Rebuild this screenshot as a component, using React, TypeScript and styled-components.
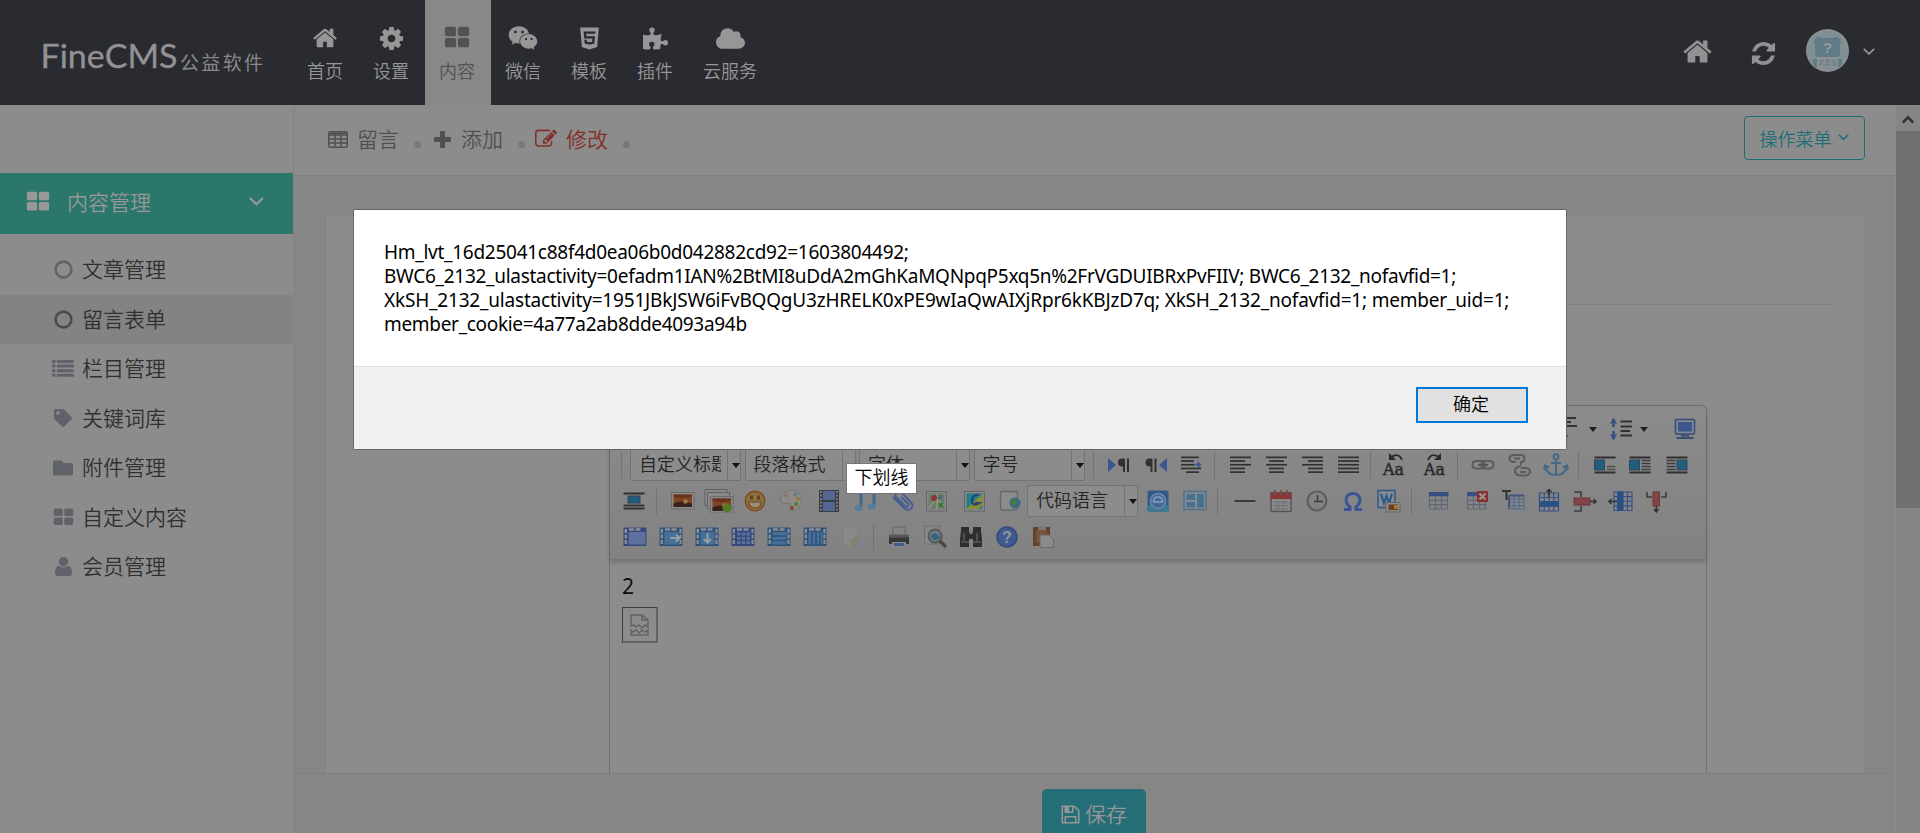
import React from "react";
import styled, { createGlobalStyle } from "styled-components";
import { FaWeixin, FaHtml5, FaPuzzlePiece, FaCloud, FaTag, FaFolder } from "react-icons/fa";

const paper = "#8c8c8c";
const canvas = "#868686";
const line = "#808080";
const teal = "#1c6d77";

const GlobalStyle = createGlobalStyle`
  * { box-sizing: border-box; }
  body {
    margin: 0;
    overflow: hidden;
    background: ${canvas};
    font-family: "Open Sans", "Noto Sans CJK SC", sans-serif;
    font-weight: 350;
  }
`;

/* ---------- shared glyphs ---------- */

const glyphs = {
  home: "M1472 992v480q0 26-19 45t-45 19h-384v-384h-256v384h-384q-26 0-45-19t-19-45v-480q0-1 .5-3t.5-3l575-474 575 474q1 2 1 6zm223-69l-62 74q-8 9-21 11h-3q-13 0-21-7l-692-577-692 577q-12 8-24 7-13-2-21-11l-62-74q-8-10-7-23.5t11-21.5l719-599q32-26 76-26t76 26l244 204v-195q0-14 9-23t23-9h192q14 0 23 9t9 23v408l219 182q10 8 11 21.5t-7 23.5z",
  cog: "M1152 896q0-106-75-181t-181-75-181 75-75 181 75 181 181 75 181-75 75-181zm512-109v222q0 12-8 23t-20 13l-185 28q-19 54-39 91 35 50 107 138 10 12 10 25t-9 23q-27 37-99 108t-94 71q-12 0-26-9l-138-108q-44 23-91 38-16 136-29 186-7 28-36 28h-222q-14 0-24.5-8.5t-11.5-21.5l-28-184q-49-16-90-37l-141 107q-10 9-25 9-14 0-25-11-126-114-165-168-7-10-7-23 0-12 8-23 15-21 51-66.5t54-70.5q-27-50-41-99l-183-27q-13-2-21-12.5t-8-23.5v-222q0-12 8-23t19-13l186-28q14-46 39-92-40-57-107-138-10-12-10-24 0-10 9-23 26-36 98.5-107.5t94.5-71.5q13 0 26 10l138 107q44-23 91-38 16-136 29-186 7-28 36-28h222q14 0 24.5 8.5t11.5 21.5l28 184q49 16 90 37l142-107q9-9 24-9 13 0 25 10 129 119 165 170 7 8 7 22 0 12-8 23-15 21-51 66.5t-54 70.5q26 50 41 98l183 28q13 2 21 12.5t8 23.5z",
  large: "M832 1024v384q0 52-38 90t-90 38h-512q-52 0-90-38t-38-90v-384q0-52 38-90t90-38h512q52 0 90 38t38 90zm0-768v384q0 52-38 90t-90 38h-512q-52 0-90-38t-38-90v-384q0-52 38-90t90-38h512q52 0 90 38t38 90zm896 768v384q0 52-38 90t-90 38h-512q-52 0-90-38t-38-90v-384q0-52 38-90t90-38h512q52 0 90 38t38 90zm0-768v384q0 52-38 90t-90 38h-512q-52 0-90-38t-38-90v-384q0-52 38-90t90-38h512q52 0 90 38t38 90z",
  refresh: "M1639 1056q0 5-1 7-64 268-268 434.5t-478 166.5q-146 0-282.5-55t-243.5-157l-129 129q-19 19-45 19t-45-19-19-45v-448q0-26 19-45t45-19h448q26 0 45 19t19 45-19 45l-137 137q71 66 161 102t187 36q134 0 250-65t186-179q11-17 53-117 8-23 30-23h192q13 0 22.5 9.5t9.5 22.5zm25-800v448q0 26-19 45t-45 19h-448q-26 0-45-19t-19-45 19-45l138-138q-148-137-349-137-134 0-250 65t-186 179q-11 17-53 117-8 23-30 23h-199q-13 0-22.5-9.5t-9.5-22.5v-7q65-268 270-434.5t480-166.5q146 0 284 55.5t245 156.500l130-129q19-19 45-19t45 19 19 45z",
  edit: "M888 1184l116-116-152-152-116 116v56h96v96h56zm440-720q-16-16-33 1l-350 350q-17 17-1 33t33-1l350-350q17-17 1-33zm80 594v190q0 119-84.5 203.5t-203.5 84.5h-832q-119 0-203.5-84.5t-84.5-203.5v-832q0-119 84.5-203.5t203.5-84.5h832q63 0 117 25 15 7 18 23 3 17-9 29l-49 49q-14 14-32 8-23-6-45-6h-832q-66 0-113 47t-47 113v832q0 66 47 113t113 47h832q66 0 113-47t47-113v-126q0-13 9-22l64-64q15-15 35-7t20 29zm-96-738l288 288-672 672h-288v-288zm444 132l-92 92-288-288 92-92q28-28 68-28t68 28l152 152q28 28 28 68t-28 68z",
  floppy: "M512 1536h768v-384h-768v384zm896 0h128v-896q0-14-10-38.5t-20-34.5l-281-281q-10-10-34-20t-39-10v416q0 40-28 68t-68 28h-576q-40 0-68-28t-28-68v-416h-128v1280h128v-416q0-40 28-68t68-28h832q40 0 68 28t28 68v416zm-384-928v-320q0-13-9.5-22.5t-22.5-9.5h-192q-13 0-22.5 9.5t-9.5 22.5v320q0 13 9.5 22.5t22.5 9.5h192q13 0 22.5-9.5t9.5-22.5zm640 32v928q0 40-28 68t-68 28h-1344q-40 0-68-28t-28-68v-1344q0-40 28-68t68-28h928q40 0 88 20t76 48l280 280q28 28 48 76t20 88z",
};

const Glyph = ({ name, size }: { name: keyof typeof glyphs; size: number }) => (
  <svg width={size} height={size} viewBox="0 0 1792 1792" fill="currentColor"><path d={glyphs[name]} /></svg>
);

const Chevron = ({ w = 15 }: { w?: number }) => (
  <svg width={w} height={w * 0.6} viewBox="0 0 15 9" fill="none" stroke="currentColor" strokeWidth="2.2"><path d="M1 1l6.500 6.300L14 1" /></svg>
);

const ListGlyph = () => (
  <svg width="22" height="17" viewBox="0 0 22 17" fill="currentColor">
    {[0, 4.600, 9.200, 13.800].map((y) => (
      <g key={y}><rect y={y} width="3.500" height="3" rx=".5" /><rect x="4.800" y={y} width="17" height="3" rx=".5" /></g>
    ))}
  </svg>
);

const RingGlyph = () => (
  <svg width="19" height="19" viewBox="0 0 19 19" fill="none" stroke="currentColor" strokeWidth="2.600"><circle cx="9.500" cy="9.500" r="7.900" /></svg>
);

const UserGlyph = () => (
  <svg width="17" height="19" viewBox="0 0 17 19" fill="currentColor">
    <circle cx="8.500" cy="4.800" r="4.700" />
    <path d="M3.800 8.800Q8.500 12.200 13.200 8.800Q17 9.500 17 15.500Q17 19 14 19H3Q0 19 0 15.500Q0 9.500 3.800 8.800z" />
  </svg>
);

const TableGlyph = () => (
  <svg width="20" height="17" viewBox="0 0 20 17" fill="none" stroke="currentColor" strokeWidth="1.500">
    <rect x=".75" y=".75" width="18.500" height="15.500" rx="1.500" />
    <path d="M1 2.200h18M1 4h18M1 8h18M1 12h18M7 3v13M13 3v13" />
  </svg>
);

const PlusGlyph = () => (
  <svg width="17" height="17" viewBox="0 0 17 17" fill="currentColor"><path d="M6 1q0-1 1-1h3q1 0 1 1v5h5q1 0 1 1v3q0 1-1 1h-5v5q0 1-1 1H7q-1 0-1-1v-5H1q-1 0-1-1V7q0-1 1-1h5z" /></svg>
);

/* ---------- header ---------- */

const Page = styled.div`
  height: 833px;
  width: 1920px;
  display: flex;
  flex-direction: column;
  overflow: hidden;
  position: relative;
`;

const Header = styled.header`
  height: 105px;
  flex: none;
  display: flex;
  background: #2a2b31;
  color: #919191;
`;

const LogoArea = styled.div`
  width: 292px;
`;

const Nav = styled.nav`
  display: flex;
  flex: 1;
`;

const NavItem = styled.a<{ $active?: boolean }>`
  min-width: 66px;
  padding: 0 16px 0 14px;
  display: flex;
  flex-direction: column;
  align-items: center;
  font-size: 18px;
  line-height: 26px;
  background: ${(p) => (p.$active ? "#888888" : "transparent")};
  color: ${(p) => (p.$active ? "#505254" : "#969696")};
  &:first-child { margin-left: 1px; }
`;

const NavIcon = styled.span`
  height: 32px;
  margin: 22px 0 4px;
  display: flex;
  align-items: center;
`;

const HeaderTools = styled.div`
  display: flex;
  align-items: center;
  height: 101px;
  padding-right: 45px;
`;

const ToolSlot = styled.span<{ $after: number; $drop?: number }>`
  display: flex;
  margin-right: ${(p) => p.$after}px;
  padding-top: ${(p) => p.$drop ?? 0}px;
`;

const Logo = () => (
  <svg width="292" height="105">
    <text x="40.500" y="67.500" textLength="137" lengthAdjust="spacingAndGlyphs" fontFamily="Lato, sans-serif" fontWeight="400" fontSize="33.500" fill="#929294" stroke="#929294" strokeWidth=".3">FineCMS</text>
    <text x="180" y="69.500" textLength="83" fontFamily="'Noto Sans CJK SC', sans-serif" fontWeight="400" fontSize="19" fill="#88888b">公益软件</text>
  </svg>
);

const Avatar = () => (
  <svg width="43" height="43" viewBox="0 0 43 43">
    <circle cx="21.500" cy="21.500" r="21.500" fill="#8c8f90" />
    <circle cx="21.500" cy="21.500" r="19.500" fill="#7f8f93" />
    <path d="M10 9q3-2 6 0h11q3-2 6 0q3 3 1 6v9q0 4-4 4H13q-4 0-4-4v-9q-2-3 1-6z" fill="#5f7b87" />
    <path d="M7 30h5v8H9q-3-3-2-8zM36 30h-5v8h3q3-3 2-8z" fill="#5f7b87" />
    <rect x="11" y="28.500" width="21" height="9" fill="#909496" />
    <text x="21.500" y="24" textAnchor="middle" fontFamily="Liberation Sans, sans-serif" fontWeight="700" fontSize="15" fill="#969a9b">?</text>
    <text x="21.500" y="36" textAnchor="middle" fontFamily="'Noto Sans CJK SC', sans-serif" fontWeight="700" fontSize="6.500" fill="#6e7f85">求真像</text>
  </svg>
);

/* ---------- sidebar ---------- */

const Body = styled.div`
  display: flex;
  flex: 1;
  min-height: 0;
`;

const Sidebar = styled.aside`
  width: 293px;
  flex: none;
  padding-top: 68px;
  background: ${paper};
`;

const SectionHead = styled.div`
  height: 61px;
  padding: 0 29px 4px 26px;
  display: flex;
  align-items: center;
  font-size: 21px;
  background: #2c776c;
  color: #989898;
`;

const SectionTitle = styled.span`
  flex: 1;
  margin: -1px 0 0 17px;
`;

const Menu = styled.ul`
  list-style: none;
  margin: 0;
  padding: 11px 0 0;
`;

const MenuItem = styled.li<{ $active?: boolean }>`
  height: 49.500px;
  padding-left: 50px;
  display: flex;
  align-items: center;
  font-size: 21px;
  color: #303030;
  background: ${(p) => (p.$active ? "#838383" : "transparent")};
`;

const MenuIcon = styled.span<{ $active?: boolean }>`
  width: 26px;
  margin-right: 6px;
  display: flex;
  justify-content: center;
  color: ${(p) => (p.$active ? "#484c52" : "#5f6369")};
`;

const Label = styled.span`
  margin-top: -3px;
`;

/* ---------- main area ---------- */

const Main = styled.main`
  flex: 1;
  min-width: 0;
  display: flex;
  flex-direction: column;
  border-left: 2px solid ${canvas};
  background: ${canvas};
`;

const Crumbs = styled.div`
  height: 71px;
  flex: none;
  display: flex;
  align-items: center;
  padding: 0 30px 0 33px;
  background: ${paper};
  border-bottom: 1px solid ${line};
  font-size: 21px;
  color: #4e5052;
`;

const Crumb = styled.span<{ $active?: boolean; $gap?: number }>`
  display: flex;
  align-items: center;
  margin-top: -2px;
  gap: ${(p) => p.$gap ?? 9}px;
  color: ${(p) => (p.$active ? "#832e29" : "inherit")};
`;

const Dot = styled.i<{ $after: number }>`
  width: 7px;
  height: 7px;
  margin: 8px ${(p) => p.$after}px 0 15px;
  border-radius: 50%;
  background: #787878;
`;

const ActionMenu = styled.button`
  height: 44px;
  width: 121px;
  margin: 0 0 5px auto;
  display: flex;
  align-items: center;
  justify-content: center;
  gap: 6px;
  padding: 0 1px 0 0;
  border: 1px solid ${teal};
  border-radius: 4px;
  background: transparent;
  color: ${teal};
  font: inherit;
  font-size: 18px;
`;

const Card = styled.section`
  flex: 1;
  min-height: 0;
  overflow: hidden;
  margin: 38px 30px 0 30px;
  padding: 0 29px;
  border: 1px solid #828384;
  border-bottom: 0;
  border-radius: 5px 5px 0 0;
  background: ${paper};
`;

const CardHead = styled.div`
  height: 90px;
  border-bottom: 1px solid #828282;
`;

const Editor = styled.div`
  width: 1098px;
  height: 380px;
  margin: 100px 0 0 254px;
  border: 1px solid #727272;
  border-radius: 5px 5px 0 0;
`;

const Toolbar = styled.div`
  height: 154px;
  padding: 5px 6px 0 7px;
  border-bottom: 1px solid #757575;
  border-radius: 5px 5px 0 0;
  background: linear-gradient(#8b8b8b, #828282);
  box-shadow: 0 2px 5px rgba(0, 0, 0, 0.2);
`;

const ToolRow = styled.div<{ $end?: boolean }>`
  height: 36px;
  display: flex;
  align-items: center;
  justify-content: ${(p) => (p.$end ? "flex-end" : "flex-start")};
`;

const Tool = styled.span<{ $gap?: number; $w?: number }>`
  width: ${(p) => p.$w ?? 36}px;
  flex: none;
  margin-left: ${(p) => p.$gap ?? 0}px;
  display: flex;
  justify-content: center;
  opacity: 0.88;
`;

const Separator = styled.i<{ $gap?: number }>`
  width: 1px;
  height: 27px;
  flex: none;
  margin: 0 7px 0 ${(p) => p.$gap ?? 4}px;
  background: #727272;
`;

const Combo = styled.span<{ $gap?: number }>`
  width: 111px;
  height: 32px;
  flex: none;
  display: flex;
  margin-left: ${(p) => p.$gap ?? 3.500}px;
  border: 1px solid #737373;
  border-radius: 2px;
  background: ${paper};
  font-size: 18px;
  line-height: 28px;
  color: #242424;
`;

const ComboText = styled.span`
  width: 97px;
  flex: none;
  padding-left: 8px;
  border-right: 1px solid #737373;
  overflow: hidden;
  white-space: nowrap;
`;

const ComboClip = styled.span`
  display: inline-block;
  max-width: 82px;
  overflow: hidden;
  vertical-align: top;
`;

const Caret = styled.i`
  border: 4px solid transparent;
  border-top: 5px solid #111;
  border-bottom: 0;
  margin: 13px auto 0 4px;
`;

const RowCaret = styled(Caret)`
  margin: 1px 0 0 0;
`;

const Document = styled.div`
  padding: 8px 12px;
  font-size: 21px;
  line-height: 36px;
  color: #0c0c0c;
  font-weight: 400;
  font-family: "Noto Sans", sans-serif;
`;

const BrokenImage = styled.span`
  width: 36px;
  height: 36px;
  margin-top: 3px;
  display: flex;
  align-items: center;
  justify-content: center;
  border: 1px solid #3f3f3f;
  border-right: 2px solid #646464;
  border-bottom: 2px solid #646464;
`;

const Footer = styled.footer`
  height: 60px;
  flex: none;
  display: flex;
  justify-content: center;
  padding: 15px 2px 0 0;
  border-top: 1px solid ${line};
`;

const SaveButton = styled.button`
  width: 104px;
  height: 52px;
  flex: none;
  display: flex;
  align-items: center;
  justify-content: center;
  gap: 4px;
  padding: 0 1px 2px 0;
  border: 0;
  border-radius: 5px;
  background: #256e77;
  color: #979797;
  font: inherit;
  font-size: 21px;
`;

const Scrollbar = styled.div`
  width: 25px;
  flex: none;
  border-left: 1px solid #8b8b8b;
  background: #858585;
`;

const ScrollUp = styled.div`
  height: 26px;
  display: flex;
  align-items: center;
  justify-content: center;
  padding-top: 3px;
  color: #333;
`;

const Thumb = styled.div`
  height: 377px;
  background: #707070;
`;

/* ---------- dialog and tooltip ---------- */

const Dialog = styled.div`
  position: absolute;
  left: 353px;
  top: 209px;
  width: 1214px;
  height: 241px;
  display: flex;
  flex-direction: column;
  border: 1px solid #666;
  border-radius: 2px;
  background: #fff;
  color: #000;
`;

const Message = styled.div`
  height: 156px;
  padding: 30px 0 0 30px;
  font-family: "Noto Sans", sans-serif;
  font-weight: 400;
  font-size: 19px;
`;

const MessageLine = styled.div<{ $track: number }>`
  height: 24px;
  line-height: 24px;
  white-space: nowrap;
  letter-spacing: ${(p) => p.$track}px;
`;

const DialogFoot = styled.div`
  flex: 1;
  display: flex;
  justify-content: flex-end;
  padding: 20px 38px 0;
  border-top: 1px solid #dfdfdf;
  background: #f1f1f1;
`;

const OkButton = styled.button`
  width: 112px;
  height: 36px;
  padding: 0 2px 2px 0;
  border: 2px solid #0078d7;
  background: #e1e1e1;
  color: #000;
  font: inherit;
  font-size: 18px;
  line-height: 28px;
`;

const Tip = styled.div`
  position: absolute;
  left: 846px;
  top: 463px;
  width: 71px;
  height: 31px;
  border: 1px solid #767676;
  background: #fff;
  color: #000;
  font-size: 18px;
  line-height: 27px;
  text-align: center;
`;

/* ---------- editor tool drawings ---------- */

const Svg = ({ children, w = 24 }: { children: React.ReactNode; w?: number }) => (
  <svg width={w} height="24" viewBox={`0 0 ${w} 24`} fill="none">{children}</svg>
);

const ink = "#262626";
const blue = "#2f4a86";

const Bars = ({ rows, x = 2 }: { rows: [number, number][]; x?: number }) => (
  <g fill={ink}>{rows.map(([o, w], i) => <rect key={i} x={x + o} y={3.500 + i * 3.700} width={w} height="1.700" />)}</g>
);

const Align = ({ kind }: { kind: "l" | "c" | "r" | "j" }) => {
  const widths = kind === "j" ? [21, 21, 21, 21, 21] : [21, 15, 21, 15, 15];
  const rows = widths.map((w, i): [number, number] => [kind === "r" ? 21 - w : kind === "c" ? (21 - w) / 2 : 0, w]);
  return <Svg><Bars rows={rows} /></Svg>;
};

const Float = ({ side }: { side: "l" | "r" | "full" | "none" }) => (
  <Svg>
    <path d="M1.500 4.500h21M1.500 19.500h21" stroke={ink} strokeWidth="1.800" />
    {side === "none" && <path d="M1.500 16.500h21" stroke={ink} strokeWidth="1.800" />}
    <rect x={side === "r" ? 12 : side === "none" ? 6 : 1.500} y="7" width={side === "none" ? 12 : 10} height={side === "none" ? 7 : 10} fill="#12597c" stroke="#2a3c50" />
    {side === "l" && <path d="M14 13.500h8.500M14 16.500h8.500" stroke="#444" strokeWidth="1.300" />}
    {side === "full" && <path d="M13.500 7.500h9M13.500 10.500h9M13.500 13.500h9M13.500 16.500h9" stroke="#333" strokeWidth="1.300" />}
    {side === "r" && <path d="M1.500 7.500h9M1.500 10.500h9M1.500 13.500h9M1.500 16.500h9" stroke="#333" strokeWidth="1.300" />}
  </Svg>
);

const Pilcrow = ({ rtl }: { rtl?: boolean }) => (
  <Svg>
    <path d={rtl ? "M23 5v14l-8-7z" : "M1 5v14l8-7z"} fill="#2f5292" />
    <g transform={rtl ? "translate(-9.500 0)" : ""}>
      <path d="M22.500 5.500h-7.500a4 4 0 0 0 0 8h1.500V5.500z" fill={ink} />
      <path d="M17 5.500V19M21 5.500V19" stroke={ink} strokeWidth="2" />
    </g>
  </Svg>
);

const CaseTool = ({ flip }: { flip?: boolean }) => (
  <Svg>
    <text x="1" y="22" fontFamily="DejaVu Serif, serif" fontWeight="400" fontSize="16" fill="#1c1c1c" stroke="#1c1c1c" strokeWidth=".5" textLength="21" lengthAdjust="spacingAndGlyphs">Aa</text>
    <g transform={flip ? "translate(25 0) scale(-1 1)" : ""}>
      <path d="M9 4q8-5 11 3" stroke="#1c1c1c" strokeWidth="1.700" />
      <path d="M7 0v7h7z" fill="#1c1c1c" />
    </g>
  </Svg>
);

const grid = (x: number, y: number, w: number, h: number, n: number, m: number, color: string) => {
  let d = `M${x} ${y}h${w}v${h}h${-w}z`;
  for (let i = 1; i < n; i++) d += `M${x + (w / n) * i} ${y}v${h}`;
  for (let i = 1; i < m; i++) d += `M${x} ${y + (h / m) * i}h${w}`;
  return <path d={d} stroke={color} strokeWidth="1.200" />;
};

const TableTool = ({ cross }: { cross?: boolean }) => (
  <Svg>
    <rect x="2" y="3" width="19" height="17" fill="#838689" />
    {grid(2.500, 7, 18, 13, 3, 3, "#5c646f")}
    <rect x="2" y="3" width="19.500" height="4" fill="#2d4984" />
    {cross && <><rect x="12" y="2" width="11" height="11" rx="1" fill="#8b2222" /><path d="M14.500 4.500l6 6M20.500 4.500l-6 6" stroke="#999" strokeWidth="2.200" /></>}
  </Svg>
);

const CaptionTool = () => (
  <Svg>
    <path d="M1 2h9M5.500 2v9" stroke={ink} strokeWidth="2" />
    {grid(8, 6.500, 15, 13.500, 3, 4, "#536a8c")}
    <path d="M8 6.500h15M8 6.500v13" stroke="#384f78" strokeWidth="2" />
  </Svg>
);

const InsertRow = () => (
  <Svg>{grid(2.500, 4, 19, 18, 4, 4, "#2d4984")}<rect x="2" y="12" width="20" height="5.500" fill="#1c4c85" /><path d="M12 0v8M9.500 3L12 .5 14.500 3" stroke={ink} strokeWidth="1.500" /></Svg>
);
const InsertCol = () => (
  <Svg w={26}>{grid(7, 3, 18, 18.500, 4, 4, "#2d4984")}<rect x="10" y="2.500" width="6" height="19.500" fill="#1c4c85" /><path d="M10 12.500H2M4.500 10L2 12.500 4.500 15" stroke={ink} strokeWidth="1.500" /></Svg>
);
const DeleteRow = () => (
  <Svg><path d="M1 3h7v5M1 22h7v-5" stroke="#333" strokeWidth="1.600" /><rect x="1" y="9" width="16" height="7" fill="#843c3c" stroke="#652d2d" /><path d="M17 12.500h6M20.500 10l2.500 2.500-2.500 2.500" stroke={ink} strokeWidth="1.500" /></Svg>
);
const DeleteCol = () => (
  <Svg><path d="M3 3v5h5M22 3v5h-5" stroke="#333" strokeWidth="1.600" /><rect x="9" y="3" width="6.500" height="14" fill="#843c3c" stroke="#652d2d" /><path d="M12.300 17v6M10 20l2.300 3 2.300-3" stroke={ink} strokeWidth="1.500" /></Svg>
);

const CellTool = ({ kind }: { kind: "merge" | "right" | "down" | "split" | "rows" | "cols" }) => {
  const soft = kind === "merge" || kind === "split";
  const edge = soft ? "#2b417b" : "#234c78";
  return (
    <Svg>
      <rect x=".5" y="2.500" width="23" height="18.500" fill={edge} />
      <path d="M6 4.500h13" stroke="#8a8f96" strokeWidth="2.400" strokeDasharray="5 1.500" />
      <path d="M2.800 4v16" stroke="#8a8f96" strokeWidth="2.400" strokeDasharray="4 1.500" />
      {kind !== "merge" && <path d="M21.500 4v16" stroke="#8a8f96" strokeWidth="2.200" strokeDasharray="4 1.500" />}
      <rect x="5.500" y="7" width={kind === "merge" ? 17 : 14} height="12.500" fill={soft ? "#596ea1" : "#3f6e9d"} />
      {kind === "right" && <path d="M11 13h9M17 9.500l3.500 3.500-3.500 3.500" stroke="#9aa1a8" strokeWidth="2" />}
      {kind === "down" && <path d="M12.500 8v9M9 14l3.500 3.500L16 14" stroke="#9aa1a8" strokeWidth="2" />}
      {kind === "split" && grid(5.500, 7, 14, 12.500, 3, 3, "#2b417b")}
      {kind === "rows" && <path d="M5 11h15M5 15.500h15" stroke="#234c78" strokeWidth="1.500" />}
      {kind === "cols" && <path d="M9 6v14M13 6v14M17 6v14" stroke="#234c78" strokeWidth="1.500" />}
    </Svg>
  );
};

const Picture = ({ many }: { many?: boolean }) => (
  <Svg w={30}>
    {many && <><rect x="1" y=".5" width="22" height="16" fill="#8a8a8a" stroke="#5c5c5c" /><rect x="3.500" y="3.500" width="22" height="16" fill="#8a8a8a" stroke="#5c5c5c" /></>}
    <g transform={many ? "translate(3 4)" : "translate(0 0)"}>
      <rect x="3.500" y="3.500" width="22.500" height="16.500" fill="#8b8b8b" stroke="#686868" />
      <rect x="5.500" y="5.500" width="18.500" height="12.500" fill="#833b16" />
      <path d="M5.500 14.500q7-4 18.500 0v3.500H5.500z" fill="#2d160d" />
      <path d="M5.500 5.500h18.500v2q-9 3-18.500 0z" fill="#65280f" />
      <circle cx="17.500" cy="12.500" r="2.200" fill="#a5783d" />
    </g>
    {many && <path d="M19 17l4-3 2.500 1.500 3 2.500-2 4-4 2-4-3z" fill="#4d7b19" />}
  </Svg>
);

const Smile = () => (
  <Svg><circle cx="12" cy="12" r="9.700" fill="#8c7137" stroke="#844313" strokeWidth="1.500" /><path d="M8.500 6.500v4M15.500 6.500v4" stroke="#663516" strokeWidth="3" /><path d="M5.500 13h13q-1 6-6.500 6t-6.500-6z" fill="#989078" stroke="#713c14" strokeWidth="1.200" /></Svg>
);

const Palette = () => (
  <Svg w={26}><path d="M2 10Q4 2 14 1.500q9 0 9.500 9-1 11-10 12-3-1-1-6 0-4-4-2-6 1-6.500-4.500z" fill="#8f8c84" stroke="#77736a" /><circle cx="8" cy="6.500" r="2" fill="#7c7a75" /><circle cx="17.500" cy="5.500" r="2" fill="#587d92" /><circle cx="20" cy="10" r="2" fill="#927c2b" /><circle cx="18" cy="15" r="2" fill="#4b7a32" /><circle cx="14" cy="19" r="2" fill="#8a3d2a" /></Svg>
);

const Film = () => (
  <Svg><rect x="2" y="1" width="20" height="22" fill="#2f3237" /><path d="M4 2v20M20 2v20" stroke="#858585" strokeWidth="1.700" strokeDasharray="2 1.500" /><rect x="6" y="2" width="12" height="9" fill="#4e6396" /><rect x="6" y="13" width="12" height="9" fill="#4e6396" /></Svg>
);

const Music = () => (
  <Svg><path d="M8 18V4l13-2v15" stroke="#3a6690" strokeWidth="3" /><ellipse cx="5.500" cy="19" rx="4" ry="3.300" fill="#547c9c" /><ellipse cx="18.500" cy="17.500" rx="4" ry="3.300" fill="#547c9c" /></Svg>
);

const Clip = () => (
  <Svg><path d="M3 8l11 11q3 3 6.500 1t1-6L12 4Q9 2 6.500 4T6 8l9 9q2 1.500 3 0t0-2.500L11 8" stroke="#3f5893" strokeWidth="2" /></Svg>
);

const MapTool = ({ google }: { google?: boolean }) => (
  <Svg>
    <rect x="1.500" y="2.500" width="20" height="19.500" fill="#8a8a8a" stroke="#626262" />
    {google
      ? <><rect x="3.500" y="4.500" width="16" height="15.500" fill="#14808a" /><path d="M3.500 20L19.500 4.500v12L15 20z" fill="#8b9129" /><path d="M16 6q-7-1-7 6 1 6 7 2h-4" stroke="#203b74" strokeWidth="2.200" /></>
      : <><rect x="3.500" y="4.500" width="16" height="15.500" fill="#657d68" /><path d="M4 19l7-9 8 6M12 5v15" stroke="#9b977b" strokeWidth="1.500" /><circle cx="9" cy="9" r="3" fill="#8e2928" /><rect x="14" y="14" width="4" height="4" fill="#34792f" /><rect x="13" y="6" width="4" height="4" fill="#4b6687" /></>}
  </Svg>
);

const FrameTool = () => (
  <Svg><rect x="1.500" y="2.500" width="17" height="18.500" rx="1.500" fill="#8b8d8f" stroke="#5c666f" strokeWidth="1.300" /><circle cx="16" cy="14" r="5.500" fill="#33647f" /><path d="M12 12q3-4 5-1t-2 6q-3-1-3-5z" fill="#3d7c3a" /></Svg>
);

const AppTool = () => (
  <Svg><rect x="1.500" y="1.500" width="21" height="21" rx="2" fill="#26538a" /><rect x="1.500" y="16" width="21" height="6.500" fill="#2f7a93" /><circle cx="12" cy="12" r="7.500" stroke="#6c89ab" strokeWidth="1.600" fill="#3b66a0" /><path d="M7.500 13q0-5 4.500-5t4.500 5z" stroke="#8da3bd" strokeWidth="1.500" /></Svg>
);

const Template = () => (
  <Svg><rect x="1" y="2.500" width="22" height="18" fill="#828d95" stroke="#4a6f8c" strokeWidth="1.500" /><path d="M3.500 5h8.500v6H3.500zM3.500 13h8.500v5.500H3.500zM14 5h7v13.500h-7z" fill="#3e7091" /></Svg>
);

const Calendar = () => (
  <Svg><rect x="2" y="5" width="20" height="17.500" fill="#898989" stroke="#4b4b4b" strokeWidth="1.300" /><rect x="1.500" y="3" width="21" height="7" fill="#8a2b2b" /><path d="M6 1v5M12 1v5M18 1v5" stroke="#555" strokeWidth="2" /><path d="M5 13h14M5 16.500h14M5 20h14M9 12v9M14.500 12v9" stroke="#656e78" /></Svg>
);

const Clock = () => (
  <Svg><circle cx="12" cy="12" r="9.500" fill="#828282" stroke="#575757" strokeWidth="2" /><path d="M12.500 6v7M9 12.500h9" stroke="#333" strokeWidth="1.500" /></Svg>
);

const Omega = () => (
  <Svg><path d="M3 20.500h6v-2.500Q5 15 5 10.500 6 4.500 12 4.500t7 6q0 4.500-4 7.500v2.500h6" stroke="#304f9a" strokeWidth="3" /></Svg>
);

const WordTool = () => (
  <Svg><rect x="1" y="1.500" width="17" height="17" fill="#858b92" stroke="#24548a" strokeWidth="1.500" /><path d="M4 5l3 9 2.500-7 2.500 7 3-9" stroke="#1f5288" strokeWidth="2.200" /><rect x="9" y="13.500" width="14" height="9.500" fill="#8c8c8c" stroke="#646464" /><rect x="11.500" y="15.500" width="9.500" height="5.500" fill="#693512" /><path d="M17 16h4v4h-4z" fill="#a77921" /></Svg>
);

const LinkTool = () => (
  <Svg><rect x="1.500" y="8" width="12" height="7.500" rx="3.500" stroke="#555" strokeWidth="2" /><rect x="10.500" y="8" width="12" height="7.500" rx="3.500" stroke="#555" strokeWidth="2" /><path d="M7 11.800h10" stroke="#4b4b4b" strokeWidth="2" /></Svg>
);

const UnlinkTool = () => (
  <Svg><g stroke="#555" strokeWidth="2"><path d="M8 9H5Q1.500 8 1.500 5.500T5 2h8q3.500 0 3.500 3.500T13 9v3" /><path d="M6 5.500h6" /><path d="M13 13q-6 1-6 5t5 4.500h6q4-1 4-4t-4-3.500h-5M12 19h6" /></g></Svg>
);

const Anchor = () => (
  <Svg w={26}><g stroke="#3c6488" strokeWidth="2"><circle cx="13" cy="3.800" r="2.500" /><path d="M13 6v16M8 10h10M2 13q2 9 11 9t11-9M1 17l1-4.500 4.500 2M25 17l-1-4.500-4.500 2" /></g></Svg>
);

const IndentTool = () => (
  <Svg><Bars rows={[[0, 18], [0, 13], [0, 13], [0, 20], [5, 13]]} x={1} /><path d="M14 10.800h3.500V8l4 3.700-4 3.700v-2.800H14z" fill="#31558f" /></Svg>
);

const Printer = () => (
  <Svg><path d="M6 2h12v9H6z" fill="#858585" stroke="#626262" /><path d="M2 10h20v9H2z" fill="#2d2d2d" /><path d="M2 9.500h20v3H2z" fill="#525252" /><path d="M5 17h14v5H5z" fill="#858b92" /><path d="M7 18h10v3H7z" fill="#365789" /></Svg>
);

const Preview = () => (
  <Svg w={26}><path d="M2.500 1h15v18h-15z" fill="#898989" stroke="#646e77" /><circle cx="13" cy="11" r="6.500" fill="#687d8a" stroke="#515151" strokeWidth="2" /><path d="M9 11q3-5 7-1t-3 5q-3 0-4-4z" fill="#265f7b" /><path d="M18 16l6 6" stroke="#404040" strokeWidth="3.500" /></Svg>
);

const Find = () => (
  <Svg><g fill="#232323"><path d="M2 2h8v4l1 3h2l1-3V2h8v4l1 8v8h-9v-8h-4v8H1v-8l1-8z" /></g><path d="M5 8v8M18 8v8" stroke="#4a4a4a" strokeWidth="2" /><path d="M2 17h8M14 17h8" stroke="#555" strokeWidth="1.300" /></Svg>
);

const Help = () => (
  <Svg><circle cx="12" cy="12" r="10" fill="#365591" stroke="#294479" strokeWidth="1.500" /><text x="12" y="18" textAnchor="middle" fontFamily="Liberation Sans, sans-serif" fontWeight="700" fontSize="16" fill="#9299a3">?</text></Svg>
);

const Paste = () => (
  <Svg><rect x="2" y="2" width="17" height="19" fill="#5e3a20" /><rect x="5" y="5" width="11" height="13" fill="#7a4c2c" /><path d="M7 1h8v4H7z" fill="#777" /><path d="M9 10h9l4.500 4.500v8H9z" fill="#8c8c8f" stroke="#676767" /></Svg>
);

const ChartTool = () => (
  <Svg><path d="M4 2h11l4 4v15H4z" fill="#8b8b8b" stroke="#808080" /><rect x="11" y="14" width="4" height="8" fill="#88846c" /><rect x="15" y="12" width="3.500" height="10" fill="#7a8570" /><rect x="18.500" y="17" width="4" height="5" fill="#758590" /></Svg>
);

const SpacingTool = ({ after }: { after?: boolean }) => after ? (
  <Svg><path d="M1 2h21M6 6h11M6 10h17M6 14h7" stroke={ink} strokeWidth="1.800" transform="translate(-1 -1)" /><path d="M9 12v11M5.500 18L9 23l3.500-5" stroke={blue} strokeWidth="2.500" /></Svg>
) : (
  <Svg><path d="M11.500 4.500H23M11.500 9.500H23M11.500 14H21M11.500 18.500H23" stroke={ink} strokeWidth="1.900" /><path d="M4.500 2v8M4.500 14v8" stroke={blue} strokeWidth="2.600" /><path d="M1 6.500L4.500 .5 8 6.500zM1 17.500l3.500 6 3.500-6z" fill={blue} /></Svg>
);

const Monitor = () => (
  <Svg><rect x="2.500" y="2.500" width="19" height="14.500" rx="1" fill="#858a91" stroke="#2e4377" strokeWidth="1.500" /><rect x="5" y="5" width="14" height="9.500" fill="#344f8f" /><path d="M8 18.500h8M3.500 21h17" stroke="#31446f" strokeWidth="2" /></Svg>
);

type Entry = { el: React.ReactNode; gap?: number };
const sep = "sep";

const renderTools = (list: (Entry | string)[]) =>
  list.map((t, i) => (typeof t === "string" ? <Separator key={i} /> : <Tool key={i} $gap={t.gap}>{t.el}</Tool>));

const Select = ({ label, gap }: { label: string; gap?: number }) => (
  <Combo $gap={gap}><ComboText><ComboClip>{label}</ComboClip></ComboText><Caret /></Combo>
);

const menu: { label: string; icon: React.ReactNode; active?: boolean }[] = [
  { label: "文章管理", icon: <RingGlyph /> },
  { label: "留言表单", icon: <RingGlyph />, active: true },
  { label: "栏目管理", icon: <ListGlyph /> },
  { label: "关键词库", icon: <FaTag size={18} /> },
  { label: "附件管理", icon: <FaFolder size={20} /> },
  { label: "自定义内容", icon: <Glyph name="large" size={21} /> },
  { label: "会员管理", icon: <UserGlyph /> },
];

const nav: { label: string; icon: React.ReactNode; active?: boolean }[] = [
  { label: "首页", icon: <Glyph name="home" size={26} /> },
  { label: "设置", icon: <Glyph name="cog" size={27} /> },
  { label: "内容", icon: <Glyph name="large" size={26} />, active: true },
  { label: "微信", icon: <FaWeixin size={30} /> },
  { label: "模板", icon: <FaHtml5 size={25} /> },
  { label: "插件", icon: <FaPuzzlePiece size={25} /> },
  { label: "云服务", icon: <FaCloud size={29} /> },
];

export default function App() {
  return (
    <Page>
      <GlobalStyle />
      <Header>
        <LogoArea><Logo /></LogoArea>
        <Nav>
          {nav.map((n) => (
            <NavItem key={n.label} $active={n.active}><NavIcon>{n.icon}</NavIcon>{n.label}</NavItem>
          ))}
        </Nav>
        <HeaderTools>
          <ToolSlot $after={37} $drop={2}><Glyph name="home" size={31} /></ToolSlot>
          <ToolSlot $after={29} $drop={6}><Glyph name="refresh" size={27} /></ToolSlot>
          <ToolSlot $after={14}><Avatar /></ToolSlot>
          <ToolSlot $after={0} $drop={2}><Chevron w={12} /></ToolSlot>
        </HeaderTools>
      </Header>
      <Body>
        <Sidebar>
          <SectionHead><Glyph name="large" size={24} /><SectionTitle>内容管理</SectionTitle><Chevron /></SectionHead>
          <Menu>
            {menu.map((m) => (
              <MenuItem key={m.label} $active={m.active}><MenuIcon $active={m.active}>{m.icon}</MenuIcon><Label>{m.label}</Label></MenuItem>
            ))}
          </Menu>
        </Sidebar>
        <Main>
          <Crumbs>
            <Crumb><TableGlyph /><Label>留言</Label></Crumb><Dot $after={13} />
            <Crumb $gap={10}><PlusGlyph /><Label>添加</Label></Crumb><Dot $after={10} />
            <Crumb $active><Glyph name="edit" size={22} /><Label>修改</Label></Crumb><Dot $after={0} />
            <ActionMenu>操作菜单<Chevron w={11} /></ActionMenu>
          </Crumbs>
          <Card>
            <CardHead />
            <Editor>
              <Toolbar>
                <ToolRow $end>
                  <Tool $w={24}><SpacingTool after /></Tool><Tool $w={28}><RowCaret /></Tool>
                  <Tool $w={24} $gap={2}><SpacingTool /></Tool><Tool $w={22}><RowCaret /></Tool>
                  <Tool $w={30} $gap={15}><Monitor /></Tool>
                </ToolRow>
                <ToolRow>
                  <Separator />
                  <Select label="自定义标题" gap={1} /><Select label="段落格式" /><Select label="字体" /><Select label="字号" />
                  <Separator $gap={8} />
                  {renderTools([
                    { el: <Pilcrow /> }, { el: <Pilcrow rtl />, gap: 1 }, { el: <IndentTool /> }, sep,
                    { el: <Align kind="l" /> }, { el: <Align kind="c" /> }, { el: <Align kind="r" /> }, { el: <Align kind="j" /> }, sep,
                    { el: <CaseTool />, gap: -2 }, { el: <CaseTool flip />, gap: 5 }, sep,
                    { el: <LinkTool /> }, { el: <UnlinkTool />, gap: 1 }, { el: <Anchor /> }, sep,
                    { el: <Float side="l" />, gap: 1 }, { el: <Float side="full" />, gap: -1 }, { el: <Float side="r" />, gap: 1 },
                  ])}
                </ToolRow>
                <ToolRow>
                  {renderTools([
                    { el: <Float side="none" />, gap: -1 }, sep,
                    { el: <Picture />, gap: 1 }, { el: <Picture many /> }, { el: <Smile /> }, { el: <Palette /> }, { el: <Film />, gap: 2 },
                    { el: <Music /> }, { el: <Clip />, gap: 1 }, { el: <MapTool />, gap: -1 }, { el: <MapTool google />, gap: 2 }, { el: <FrameTool /> },
                  ])}
                  <Select label="代码语言" gap={-2} />
                  {renderTools([
                    { el: <AppTool />, gap: 2 }, { el: <Template />, gap: 1 }, sep,
                    { el: <Svg><path d="M1.500 12h21" stroke={ink} strokeWidth="1.800" /></Svg>, gap: 2 },
                    { el: <Calendar /> }, { el: <Clock /> }, { el: <Omega /> }, { el: <WordTool /> }, sep,
                    { el: <TableTool />, gap: 2 }, { el: <TableTool cross />, gap: 1.500 }, { el: <CaptionTool /> }, { el: <InsertRow /> },
                    { el: <DeleteRow />, gap: 0.500 }, { el: <InsertCol />, gap: -1 }, { el: <DeleteCol /> },
                  ])}
                </ToolRow>
                <ToolRow>
                  {renderTools([
                    { el: <CellTool kind="merge" />, gap: -0.500 }, { el: <CellTool kind="right" /> }, { el: <CellTool kind="down" /> },
                    { el: <CellTool kind="split" /> }, { el: <CellTool kind="rows" /> }, { el: <CellTool kind="cols" /> }, { el: <ChartTool /> }, sep,
                    { el: <Printer /> }, { el: <Preview /> }, { el: <Find /> }, { el: <Help /> }, { el: <Paste /> },
                  ])}
                </ToolRow>
              </Toolbar>
              <Document>
                2
                <BrokenImage>
                  <svg width="20" height="22" viewBox="0 0 20 22" fill="none" stroke="#636363" strokeWidth="1.500">
                    <path d="M1 12V1h11l6 5v7l-3-2-3 3-3-3-3 2-2-2zM12 1v5h6M1 21v-5l2 2 3-2 3 3 3-3 3 2 3-2v5z" />
                  </svg>
                </BrokenImage>
              </Document>
            </Editor>
          </Card>
          <Footer><SaveButton><Glyph name="floppy" size={21} /><Label>保存</Label></SaveButton></Footer>
        </Main>
        <Scrollbar>
          <ScrollUp><svg width="12" height="9" viewBox="0 0 12 9" fill="none" stroke="currentColor" strokeWidth="2.600"><path d="M.8 7.500L6 2.300l5.200 5.200" /></svg></ScrollUp>
          <Thumb />
        </Scrollbar>
      </Body>
      <Tip>下划线</Tip>
      <Dialog>
        <Message>
          <MessageLine $track={-0.27}>Hm_lvt_16d25041c88f4d0ea06b0d042882cd92=1603804492;</MessageLine>
          <MessageLine $track={-0.28}>BWC6_2132_ulastactivity=0efadm1IAN%2BtMI8uDdA2mGhKaMQNpqP5xq5n%2FrVGDUIBRxPvFIIV; BWC6_2132_nofavfid=1;</MessageLine>
          <MessageLine $track={-0.19}>XkSH_2132_ulastactivity=1951JBkJSW6iFvBQQgU3zHRELK0xPE9wIaQwAIXjRpr6kKBJzD7q; XkSH_2132_nofavfid=1; member_uid=1;</MessageLine>
          <MessageLine $track={-0.31}>member_cookie=4a77a2ab8dde4093a94b</MessageLine>
        </Message>
        <DialogFoot><OkButton>确定</OkButton></DialogFoot>
      </Dialog>
    </Page>
  );
}
